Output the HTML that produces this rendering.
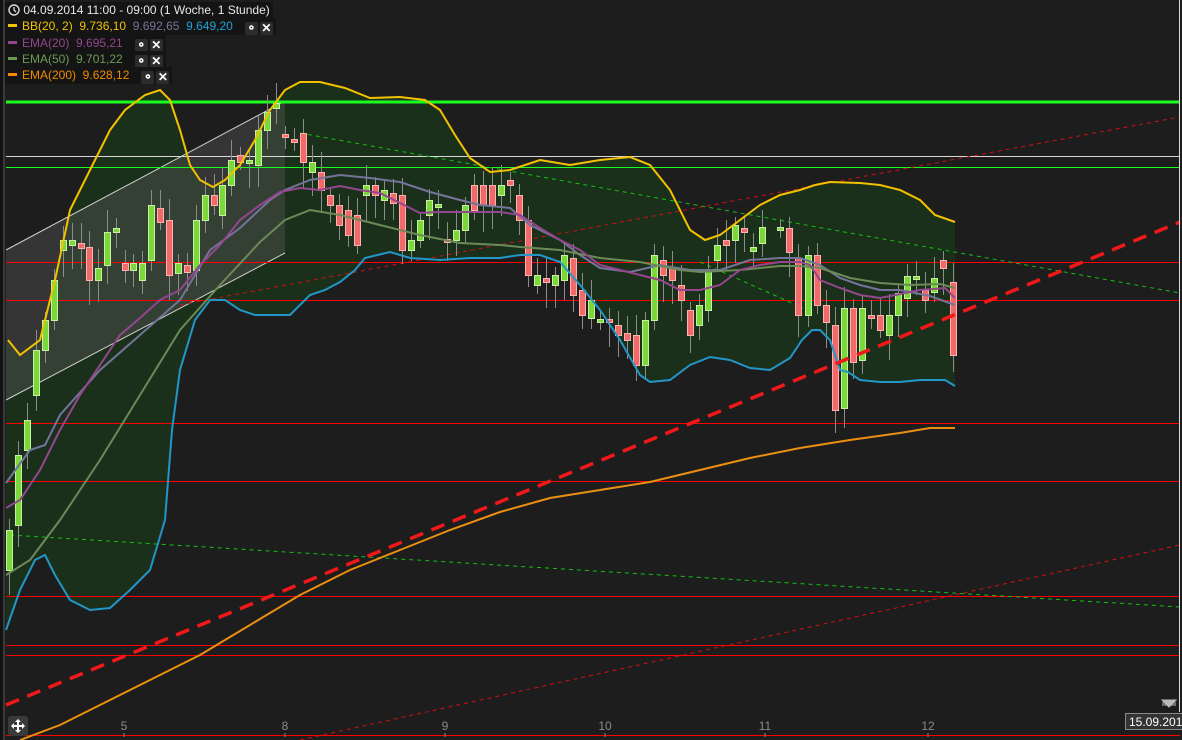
<!DOCTYPE html>
<html><head><meta charset="utf-8"><style>
html,body{margin:0;padding:0;background:#1e1d1d;width:1182px;height:740px;overflow:hidden;font-family:"Liberation Sans",sans-serif}
#c{position:absolute;left:0;top:0}
.lg{position:absolute;left:5px;font-size:12px;line-height:16px;background:#141414;padding:0 3px 0 3px;white-space:nowrap}
.b{display:inline-block;width:13px;height:13px;background:#2c2c2c;border-radius:2px;vertical-align:-2px;margin-left:2px;color:#fff;font-size:12px;text-align:center;line-height:13px;font-weight:bold}
.dash{display:inline-block;width:9px;height:3px;vertical-align:3px;margin-right:5px}
</style></head><body>
<svg id="c" width="1182" height="740" xmlns="http://www.w3.org/2000/svg">
<rect x="0" y="0" width="1182" height="740" fill="#1e1d1d"/>
<rect x="0" y="0" width="5" height="740" fill="#121212"/>
<rect x="3" y="0" width="2" height="740" fill="#3a3a3a"/>
<polygon id="fill" fill="#1b301b"/>
<polygon points="6,250 285,101 285,253 6,400" fill="#5a5a5a" fill-opacity="0.4"/>
<line x1="6" y1="250" x2="285" y2="101" stroke="#cfcfcf" stroke-width="1"/>
<line x1="6" y1="400" x2="285" y2="253" stroke="#cfcfcf" stroke-width="1"/>
<g stroke="#ff0000" stroke-width="1" shape-rendering="crispEdges">
<line x1="6" y1="262.5" x2="1180" y2="262.5"/><line x1="6" y1="300.5" x2="1180" y2="300.5"/>
<line x1="6" y1="423.5" x2="1180" y2="423.5"/><line x1="6" y1="481.5" x2="1180" y2="481.5"/>
<line x1="6" y1="596.5" x2="1180" y2="596.5"/><line x1="6" y1="645.5" x2="1180" y2="645.5"/>
<line x1="6" y1="655.5" x2="1180" y2="655.5"/><line x1="6" y1="735.5" x2="1180" y2="735.5"/>
</g>
<line x1="6" y1="102" x2="1180" y2="102" stroke="#19ff1f" stroke-width="3" shape-rendering="crispEdges"/>
<line x1="6" y1="156.5" x2="1180" y2="156.5" stroke="#d8d8d8" stroke-width="1" shape-rendering="crispEdges"/>
<line x1="6" y1="167.5" x2="1180" y2="167.5" stroke="#19ff1f" stroke-width="1" shape-rendering="crispEdges"/>
<g stroke-dasharray="4,4" fill="none">
<line x1="180" y1="305" x2="1180" y2="117" stroke="#d01010" stroke-width="1"/>
<line x1="300" y1="740" x2="1180" y2="545" stroke="#d01010" stroke-width="1"/>
<line x1="300" y1="133" x2="1180" y2="293" stroke="#12c012" stroke-width="1"/>
<line x1="10" y1="535" x2="1180" y2="607" stroke="#12c012" stroke-width="1"/>
<line x1="700" y1="262" x2="803" y2="308" stroke="#12c012" stroke-width="1"/>
</g>
<g id="candles"></g>
<polyline id="bbm" fill="none" stroke="#747399" stroke-width="2"/>
<polyline id="e50" fill="none" stroke="#6c8a58" stroke-width="2"/>
<polyline id="e20" fill="none" stroke="#94468f" stroke-width="2"/>
<polyline id="up" fill="none" stroke="#f2c200" stroke-width="2"/>
<polyline id="lo" fill="none" stroke="#2296c6" stroke-width="2"/>
<polyline id="e200" fill="none" stroke="#eb8f12" stroke-width="2"/>
<line x1="6" y1="705" x2="1180" y2="222" stroke="#f01818" stroke-width="3.5" stroke-dasharray="14,9"/>
<line x1="1179.5" y1="0" x2="1179.5" y2="712" stroke="#d8d8d8" stroke-width="1"/>
<g fill="#8a8a8a" font-size="12" text-anchor="middle">
<text x="124" y="730">5</text><text x="285" y="730">8</text><text x="445" y="730">9</text>
<text x="605" y="730">10</text><text x="765" y="730">11</text><text x="928" y="730">12</text>
</g>
<g stroke="#8a8a8a"><line x1="124" y1="733" x2="124" y2="737"/><line x1="285" y1="733" x2="285" y2="737"/><line x1="445" y1="733" x2="445" y2="737"/><line x1="605" y1="733" x2="605" y2="737"/><line x1="765" y1="733" x2="765" y2="737"/><line x1="928" y1="733" x2="928" y2="737"/></g>
<rect x="8" y="716" width="20" height="20" rx="3" fill="#3a3a3a"/>
<path d="M18 719 L21 722 H19 V725 H22 V723 L25 726 L22 729 V727 H19 V730 H21 L18 733 L15 730 H17 V727 H14 V729 L11 726 L14 723 V725 H17 V722 H15 Z" fill="#fff"/>
<path d="M1162 700 H1176 L1169 707 Z M1162 703 H1176 M1162 705 H1176" fill="#bbb" stroke="#bbb" stroke-width="1"/>
<rect x="1125.5" y="713.5" width="60" height="16" fill="#333" stroke="#888"/>
<text x="1129" y="726" fill="#fff" font-size="12">15.09.201</text>
</svg>
<div class="lg" style="top:2px;color:#e8e8e8"><svg width="12" height="12" style="vertical-align:-2px"><circle cx="6" cy="6" r="5" fill="none" stroke="#ddd" stroke-width="1.4"/><path d="M6 3V6L8 8" stroke="#ddd" stroke-width="1.3" fill="none"/></svg> 04.09.2014 11:00 - 09:00 (1 Woche, 1 Stunde)</div>
<div class="lg" style="top:18px;color:#f2c200"><span class="dash" style="background:#f2c200"></span>BB(20, 2)&nbsp; 9.736,10 <span style="color:#777599">&nbsp;9.692,65</span> <span style="color:#1fa3d6">&nbsp;9.649,20</span>&nbsp;&nbsp; <span class="b">⚬</span><span class="b">✕</span></div>
<div class="lg" style="top:35px;color:#94468f"><span class="dash" style="background:#94468f"></span>EMA(20)&nbsp; 9.695,21 &nbsp;&nbsp;<span class="b">⚬</span><span class="b">✕</span></div>
<div class="lg" style="top:51px;color:#6c9a55"><span class="dash" style="background:#6c9a55"></span>EMA(50)&nbsp; 9.701,22 &nbsp;&nbsp;<span class="b">⚬</span><span class="b">✕</span></div>
<div class="lg" style="top:67px;color:#f08c00"><span class="dash" style="background:#f08c00"></span>EMA(200)&nbsp; 9.628,12 &nbsp;&nbsp;<span class="b">⚬</span><span class="b">✕</span></div>
<script>
function P(a){return a.map(function(p){return p.join(",")}).join(" ")}
var up=[[8,340],[20,355],[40,340],[55,280],[70,210],[90,170],[110,130],[125,110],[145,95],[160,90],[170,100],[180,130],[190,165],[200,180],[213,187],[225,180],[240,165],[255,140],[270,110],[285,90],[300,82],[320,82],[345,88],[370,98],[400,97],[425,100],[440,110],[455,135],[470,158],[490,172],[510,170],[540,160],[570,165],[600,160],[630,157],[650,165],[670,190],[690,230],[705,240],[720,235],[740,220],[760,205],[780,195],[800,190],[815,185],[830,182],[860,183],[880,185],[900,190],[920,200],[935,215],[955,222]];
var lo=[[6,630],[20,590],[35,560],[45,555],[55,575],[70,600],[90,610],[110,608],[130,590],[150,570],[165,520],[172,430],[180,370],[195,320],[210,300],[225,300],[240,310],[255,315],[275,315],[290,315],[300,305],[310,295],[325,290],[340,282],[355,270],[365,258],[390,252],[410,258],[440,260],[470,258],[500,258],[520,255],[540,255],[560,262],[580,285],[600,310],[620,340],[640,375],[650,382],[670,380],[690,365],[710,357],[730,360],[750,368],[770,370],[790,358],[802,340],[812,330],[820,330],[830,340],[840,370],[848,372],[860,380],[880,382],[900,382],[920,380],[945,380],[955,386]];
var e20=[[6,508],[20,500],[40,470],[60,430],[80,395],[100,365],[120,335],[140,318],[160,300],[180,290],[200,265],[220,245],[240,220],[260,205],[280,192],[300,188],[320,190],[340,186],[360,190],[380,193],[400,203],[420,213],[440,212],[460,212],[480,212],[500,212],[520,215],[540,228],[560,240],[580,250],[600,265],[620,270],[640,275],[660,280],[680,290],[700,290],[720,285],[740,270],[760,265],[780,262],[800,262],[810,265],[820,280],[840,288],[860,295],[880,298],[900,294],[920,290],[945,288],[955,298]];
var e50=[[6,575],[30,560],[60,520],[100,460],[140,395],[180,330],[220,285],[260,242],[285,220],[310,210],[340,215],[380,225],[420,235],[460,243],[500,245],[520,247],[560,250],[600,258],[640,262],[680,270],[700,272],[740,270],[780,266],[800,266],[820,268],[850,278],[880,283],[910,285],[940,284],[955,288]];
var bbm=[[6,483],[30,450],[45,445],[60,415],[100,370],[140,335],[180,300],[210,250],[240,228],[270,200],[285,190],[310,180],[340,175],[370,178],[400,182],[430,192],[460,200],[480,205],[510,208],[530,225],[560,240],[580,255],[600,268],[630,272],[660,265],[690,270],[720,270],[750,260],[780,258],[800,258],[820,265],[840,278],[860,285],[880,290],[900,290],[930,296],[955,305]];
var e200=[[20,740],[60,725],[100,705],[150,680],[200,655],[250,625],[300,595],[350,570],[400,550],[450,530],[500,512],[550,498],[600,490],[650,482],[700,470],[750,458],[800,448],[850,440],[900,433],[930,428],[955,428]];
document.getElementById("fill").setAttribute("points",P([[6,up[0][1]]].concat(up).concat(lo.slice().reverse())));
[["up",up],["lo",lo],["e20",e20],["e50",e50],["bbm",bbm],["e200",e200]].forEach(function(a){document.getElementById(a[0]).setAttribute("points",P(a[1]))});
var C=[[9,530,570,1],[18,455,525,1],[27,420,450,1],[36,350,395,1],[45,320,350,1],[54,280,320,1],[63,240,250,1],[72,240,245,1],[81,243,248,0],[89,247,280,0],[98,268,280,1],[107,232,265,1],[116,228,232,1],[125,263,270,0],[133,263,270,1],[142,263,280,1],[151,205,260,1],[160,208,222,0],[169,220,275,0],[178,263,273,1],[187,265,272,0],[196,220,270,1],[205,195,220,1],[214,195,205,0],[222,185,215,1],[231,160,185,1],[240,155,162,0],[249,160,163,1],[258,130,165,1],[267,112,130,1],[276,103,108,1],[285,134,136,0],[294,139,141,0],[303,133,162,0],[312,162,172,1],[321,172,190,0],[330,195,205,0],[339,205,225,0],[348,210,235,0],[357,215,245,0],[366,185,195,1],[375,185,195,0],[384,190,200,1],[393,193,203,0],[402,195,250,0],[411,240,250,1],[420,220,240,1],[429,200,215,1],[438,204,207,1],[447,239,242,0],[456,230,240,1],[465,205,230,1],[474,185,210,0],[483,185,205,0],[492,185,205,0],[501,185,195,1],[510,180,185,0],[519,195,220,0],[528,220,275,0],[537,275,285,1],[546,278,282,0],[555,275,285,1],[564,255,280,1],[573,258,295,0],[582,290,315,0],[591,300,318,1],[600,319,322,1],[609,319,322,0],[618,325,335,0],[627,333,340,0],[636,335,365,0],[645,320,365,1],[654,255,320,1],[663,260,275,0],[672,268,280,0],[681,285,300,0],[690,310,335,0],[699,305,325,1],[708,270,310,1],[717,245,260,1],[726,240,245,0],[735,225,240,1],[744,228,232,0],[753,247,251,1],[762,227,243,1],[780,227,230,1],[789,228,252,0],[798,258,315,0],[808,255,315,1],[817,255,305,0],[826,305,322,0],[835,325,410,0],[844,308,408,1],[853,308,362,0],[862,308,360,1],[871,315,318,0],[880,315,330,0],[889,315,335,1],[898,293,315,1],[907,276,298,1],[916,276,279,1],[925,290,300,0],[934,278,292,1],[943,260,268,0],[953,282,355,0]];
var g=document.getElementById("candles"),h="";
C.forEach(function(c){var x=c[0]+0.5,t=c[1],b=c[2],hi=t-8-((c[0]*7)%15),l=b+8+((c[0]*13)%20);
h+='<line x1="'+x+'" y1="'+hi+'" x2="'+x+'" y2="'+l+'" stroke="#8c8c8c" stroke-width="1"/>';
h+='<rect x="'+(x-3)+'" y="'+(t+0.5)+'" width="6" height="'+Math.max(3,b-t)+'" fill="'+(c[3]?'#7ad83a':'#f06a6a')+'" stroke="'+(c[3]?'#c8f0a0':'#ffb0b0')+'" stroke-width="1"/>';});
g.innerHTML=h;
</script>
</body></html>
